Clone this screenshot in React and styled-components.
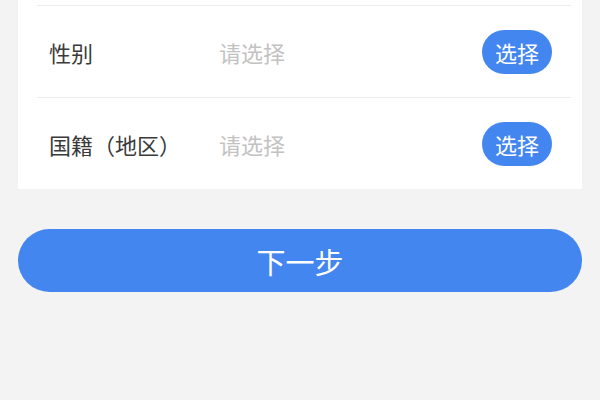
import styled, { createGlobalStyle } from "styled-components";

const GlobalStyle = createGlobalStyle`
  html, body {
    margin: 0;
    padding: 0;
    background: #f3f3f3;
    font-family: "Noto Sans CJK SC", "Noto Sans", sans-serif;
  }
`;

const fields = [
  { label: "性别", placeholder: "请选择" },
  { label: "国籍（地区）", placeholder: "请选择" },
];

export default function App() {
  return (
    <Page>
      <GlobalStyle />
      <Card>
        {fields.map((f) => (
          <Row key={f.label}>
            <Label>{f.label}</Label>
            <Value>{f.placeholder}</Value>
            <PickButton type="button">选择</PickButton>
          </Row>
        ))}
      </Card>
      <NextButton type="button">下一步</NextButton>
    </Page>
  );
}

const Page = styled.div`
  display: flex;
  flex-direction: column;
  padding: 0 18px;
  height: 400px;
  overflow: hidden;
`;

const Card = styled.div`
  background: #fff;
  padding: 5px 11px 0 19px;
`;

const Row = styled.div`
  display: flex;
  align-items: center;
  height: 91px;
  padding: 0 19px 0 12px;
  border-top: 1px solid #ececec;
`;

const Label = styled.span`
  width: 170px;
  flex-shrink: 0;
  font-size: 22px;
  color: #3a3a3a;
`;

const Value = styled.span`
  flex: 1;
  font-size: 22px;
  color: #c2c2c2;
`;

const PickButton = styled.button`
  height: 44px;
  padding: 0 13px;
  font-family: inherit;
  font-size: 22px;
  line-height: 1;
  color: #fff;
  background: #4486f0;
  border: none;
  border-radius: 22px;
`;

const NextButton = styled.button`
  margin-top: 40px;
  height: 63px;
  font-family: inherit;
  font-size: 29px;
  color: #fff;
  background: #4486f0;
  border: none;
  border-radius: 32px;
`;
